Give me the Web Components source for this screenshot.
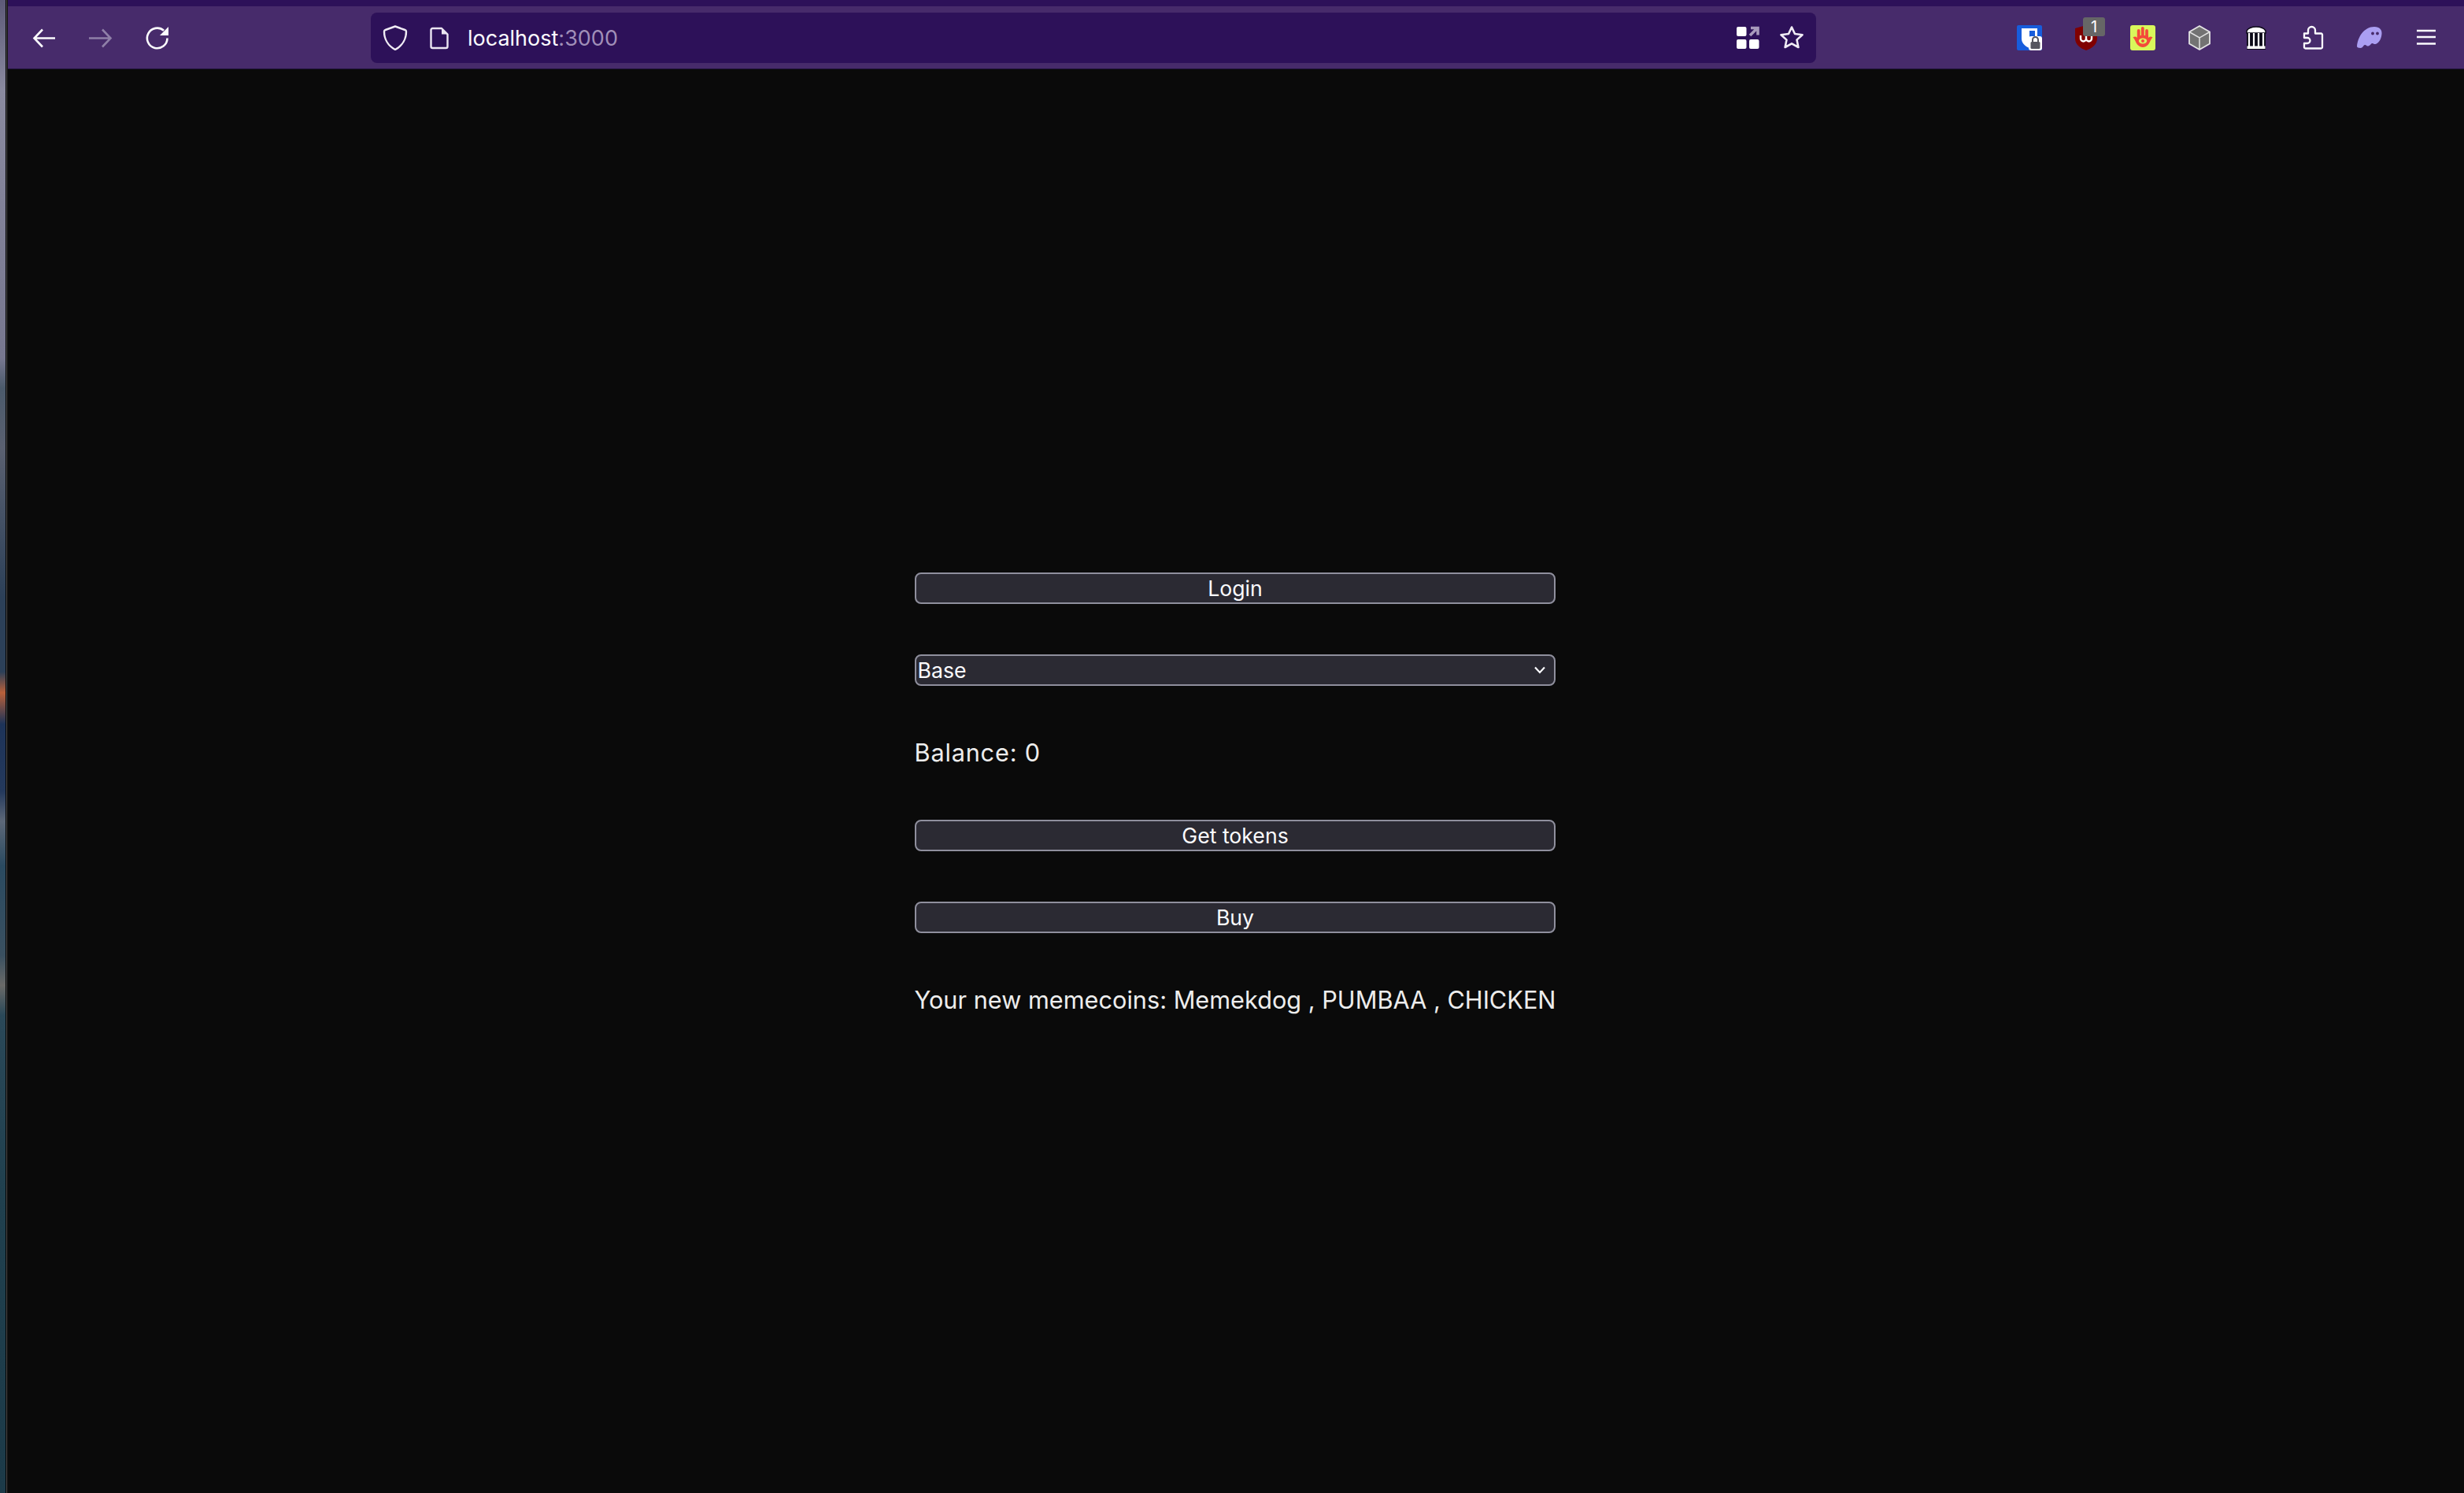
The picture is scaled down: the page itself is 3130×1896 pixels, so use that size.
<!DOCTYPE html>
<html>
<head>
<meta charset="utf-8">
<title>localhost:3000</title>
<style>
  html, body { margin: 0; height: 100%; background: #0a0a0a; }
</style>
</head>
<body>
<browser-window>
  <toolbar-button slot="nav">
    <svg viewBox="0 0 32 32"><path d="M30 16.500H4M14 5.500 3.500 16.500 14 27.500" fill="none" stroke="#fbfbfe" stroke-width="2.600"/></svg>
  </toolbar-button>
  <toolbar-button slot="nav">
    <svg viewBox="0 0 32 32"><path d="M1 16.500h27M18 5.500l10.500 11L18 27.500" fill="none" stroke="#8f7fa8" stroke-width="2.600"/></svg>
  </toolbar-button>
  <toolbar-button slot="nav">
    <svg viewBox="0 0 32 32"><path d="M28.500 16.500a12.800 12.800 0 1 1-4.400-9.700" fill="none" stroke="#fbfbfe" stroke-width="2.600"/><path d="M30 2v11H19z" fill="#fbfbfe"/></svg>
  </toolbar-button>

  <url-bar slot="url" host="localhost" port=":3000"></url-bar>

  <toolbar-button slot="ext">
    <svg viewBox="0 0 32 32"><path d="M2 0h28a2 2 0 0 1 2 2v28a2 2 0 0 1-2 2H2a2 2 0 0 1-2-2V2a2 2 0 0 1 2-2z" fill="#175ddc"/><path d="M6 4h20v13c0 6-5 10-10 12C11 27 6 23 6 17z" fill="#fff"/><path d="M16 7h7v10c0 4-4 7-7 8.500z" fill="#175ddc"/><rect x="15" y="14" width="17" height="18" rx="3" fill="#fff"/><path d="M20 21v-2.500a3.500 3.500 0 0 1 7 0V21" fill="none" stroke="#55555f" stroke-width="2"/><rect x="17.500" y="21" width="12" height="9" rx="1.500" fill="#55555f"/></svg>
  </toolbar-button>
  <toolbar-button slot="ext" badge="1">
    <svg viewBox="0 0 32 32"><path d="M16 0 30 4v13c0 8-8 13-14 15C10 30 2 25 2 17V4z" fill="#800000"/><path d="M9 13v4a3.500 3.500 0 0 0 7 0v-4 4a3.500 3.500 0 0 0 7 0v-4" fill="none" stroke="#fff" stroke-width="2.400"/></svg>
  </toolbar-button>
  <toolbar-button slot="ext">
    <svg viewBox="0 0 32 32"><rect width="32" height="32" rx="3" fill="#d9f75b"/><path d="M10.700 15V7M15.800 15V4M21 15V7" fill="none" stroke="#f4493a" stroke-width="3.800" stroke-linecap="round"/><path d="M3.500 15.500c2.500-2 4.500-1 5.500.5V13h14v3c1-1.500 3-2.500 5.500-.5-2.500 2-3.500 7-6 9.500-2 2-4 3-6.500 3s-4.500-1-6.500-3c-2.500-2.500-3.500-7.500-6-9.500z" fill="#f4493a"/><ellipse cx="16" cy="20" rx="5.200" ry="3.400" fill="#d9f75b"/><circle cx="16" cy="20" r="2" fill="#f4493a"/></svg>
  </toolbar-button>
  <toolbar-button slot="ext">
    <svg viewBox="0 0 32 32"><path d="M16 1 29 8.500v15L16 31 3 23.500v-15z" fill="#737373" stroke="#e4e4e4" stroke-width="1.800" stroke-linejoin="round"/><path d="M3 8.500 16 16 29 8.500M16 16v15" fill="none" stroke="#e4e4e4" stroke-width="1.500"/></svg>
  </toolbar-button>
  <toolbar-button slot="ext">
    <svg viewBox="0 0 32 32"><rect x="4" y="8" width="24" height="23" fill="#0c0a18"/><path d="M16 2C21 2 26 4 28 7v3H4V7c2-3 7-5 12-5z" fill="#fff" stroke="#0c0a18" stroke-width="1.500"/><path d="M7 10v17M13 10v17M19 10v17M25 10v17" stroke="#fff" stroke-width="2.200"/><rect x="4.500" y="26.500" width="23" height="3.500" fill="#fff"/></svg>
  </toolbar-button>
  <toolbar-button slot="ext">
    <svg viewBox="0 0 32 32"><path d="M5 10.500h5V6.500a4.500 4.500 0 0 1 9 0v4h7.500a1.500 1.500 0 0 1 1.500 1.500v16a1.500 1.500 0 0 1-1.500 1.500h-20A1.500 1.500 0 0 1 5 28v-5h4a3.500 3.500 0 0 0 0-7H5z" fill="none" stroke="#fbfbfe" stroke-width="2.300" stroke-linejoin="round"/></svg>
  </toolbar-button>
  <toolbar-button slot="ext">
    <svg viewBox="0 0 32 32"><path d="M0 27C1 15 9 2 22 2c7 0 10 4 9.500 9-.5 7-4 12-8 13-2 .5-3-1.500-4.500-1-1.500.5-2 3-4.500 3.500-2 .5-3-2-4.500-1.500-2 .5-2.500 4-5.500 4-2.500 0-4.500-1-4.500-2z" fill="#ab9ff2"/><circle cx="20" cy="10.500" r="1.900" fill="#472b6b"/><circle cx="26" cy="10.500" r="1.900" fill="#472b6b"/></svg>
  </toolbar-button>
  <toolbar-button slot="ext">
    <svg viewBox="0 0 32 32"><path d="M4 7h24M4 15h24M4 23.500h24" fill="none" stroke="#fbfbfe" stroke-width="2.600"/></svg>
  </toolbar-button>

  <memecoin-app>
    <app-button>Login</app-button>
    <app-select value="Base"></app-select>
    <app-text style="letter-spacing: 0.8px">Balance: 0</app-text>
    <app-button>Get tokens</app-button>
    <app-button>Buy</app-button>
    <app-text>Your new memecoins: Memekdog , PUMBAA , CHICKEN</app-text>
  </memecoin-app>
</browser-window>

<script>
// toolbar button: fixed slot, svg comes in from outside, optional count badge
class ToolbarButton extends HTMLElement {
  constructor() {
    super();
    this.attachShadow({ mode: "open" });
    this.shadowRoot.innerHTML = `
      <style>
        :host {
          display: flex;
          position: relative;
          width: 72px;
          height: 64px;
          align-items: center;
          justify-content: center;
        }
        ::slotted(svg) {
          width: 32px;
          height: 32px;
          display: block;
        }
        .badge {
          position: absolute;
          left: 32px;
          top: 6px;
          width: 28px;
          height: 24px;
          border-radius: 3px;
          background: #666666;
          color: #ffffff;
          font: 20px/24px "Inter", sans-serif;
          text-align: center;
        }
      </style>
      <slot></slot>
    `;
  }

  connectedCallback() {
    const count = this.getAttribute("badge");
    if (!count) return;
    const badge = document.createElement("span");
    badge.className = "badge";
    badge.textContent = count;
    this.shadowRoot.appendChild(badge);
  }
}

class UrlBar extends HTMLElement {
  constructor() {
    super();
    this.attachShadow({ mode: "open" });
    this.shadowRoot.innerHTML = `
      <style>
        :host {
          display: flex;
          flex: 1;
          height: 64px;
          align-items: center;
          box-sizing: border-box;
          padding: 0 15px 0 15px;
          border-radius: 8px;
          background: #2d1159;
          font: 27px "Inter", sans-serif;
          color: #fbfbfe;
        }
        svg { width: 32px; height: 32px; display: block; flex: none; }
        .shield { margin-right: 24px; }
        .page { margin-right: 20px; }
        .addr { flex: 1; white-space: nowrap; padding-top: 1px; }
        .port { color: #a08fb8; }
        .end { margin-left: 24px; }
      </style>
      <svg class="shield" viewBox="0 0 32 32"><path d="M16 1.500 28.500 6c1.200.400 1.500 1 1.500 2 0 9-4.500 18-14 23C6.500 26 2 17 2 8c0-1 .300-1.600 1.500-2z" fill="none" stroke="#f0ecf5" stroke-width="2.400" stroke-linejoin="round"/></svg>
      <svg class="page" viewBox="0 0 32 32"><path d="M7.500 4H19l7.500 7.500V27a2 2 0 0 1-2 2H7.500a2 2 0 0 1-2-2V6a2 2 0 0 1 2-2z" fill="none" stroke="#ebe5f2" stroke-width="2.400" stroke-linejoin="round"/><path d="M19 4v7.500h7.500z" fill="#ebe5f2"/></svg>
      <span class="addr"><span class="host"></span><span class="port"></span></span>
      <svg viewBox="0 0 32 32"><rect x="2" y="2" width="12.500" height="12" rx="2" fill="#fff"/><rect x="2" y="18" width="12.500" height="12" rx="2" fill="#fff"/><rect x="18" y="18" width="12.500" height="12" rx="2" fill="#fff"/><path d="M20 3.500h9v9M28 4 19 13" fill="none" stroke="#a89bbc" stroke-width="3.600"/></svg>
      <svg class="end" viewBox="0 0 32 32"><path d="M16 2.500 20 11l9.500 1.200-7 6.400 1.900 9.400L16 23.300 7.600 28l1.900-9.400-7-6.400L12 11z" fill="none" stroke="#f0ecf5" stroke-width="2.600" stroke-linejoin="round"/></svg>
    `;
  }

  connectedCallback() {
    this.shadowRoot.querySelector(".host").textContent = this.getAttribute("host");
    this.shadowRoot.querySelector(".port").textContent = this.getAttribute("port");
  }
}

// the whole window: desktop sliver on the left, then toolbar and page
class BrowserWindow extends HTMLElement {
  constructor() {
    super();
    this.attachShadow({ mode: "open" });
    this.shadowRoot.innerHTML = `
      <style>
        :host {
          display: flex;
          height: 100vh;
          overflow: hidden;
        }
        .desktop {
          flex: none;
          width: 7px;
          background: linear-gradient(180deg,
            #5d5a78 0, #8a8a9f 6%, #77778f 24%, #4b5a6b 26%, #5a6070 30%,
            #2c4058 40%, #2c4058 45%, #b8603a 46.400%, #1d3358 48.500%, #24395c 53%,
            #5d6878 55%, #2a4a60 58%, #3a5060 64%, #6a6a68 66%, #2a4858 68%, #20404e 80%, #1c3a48 100%);
        }
        .edge {
          flex: none;
          width: 3px;
          box-sizing: border-box;
          background: #4a4a4a;
          border-left: 1px solid #000000;
          border-right: 1px solid #111111;
        }
        .browser {
          flex: 1;
          min-width: 0;
          display: flex;
          flex-direction: column;
        }
        .tabstrip {
          height: 8px;
          background: #2d1159;
        }
        .toolbar {
          display: flex;
          height: 80px;
          box-sizing: border-box;
          align-items: center;
          padding: 0 12px 0 10px;
          background: #472b6b;
          border-bottom: 1px solid #21143a;
        }
        .nav, .ext { display: flex; flex: none; }
        .url { display: flex; flex: 1; margin: 0 235px; min-width: 0; }
        .page {
          flex: 1;
          min-height: 0;
          display: flex;
        }
      </style>
      <div class="desktop"></div>
      <div class="edge"></div>
      <div class="browser">
        <div class="tabstrip"></div>
        <div class="toolbar">
          <div class="nav"><slot name="nav"></slot></div>
          <div class="url"><slot name="url"></slot></div>
          <div class="ext"><slot name="ext"></slot></div>
        </div>
        <div class="page"><slot></slot></div>
      </div>
    `;
  }
}

class MemecoinApp extends HTMLElement {
  constructor() {
    super();
    this.attachShadow({ mode: "open" });
    this.shadowRoot.innerHTML = `
      <style>
        :host {
          display: flex;
          flex: 1;
          align-items: center;
          justify-content: center;
          padding: 34px 2px 0 0;
          background: #0a0a0a;
          color: #ededed;
          font: 30.700px/42px "Inter", sans-serif;
        }
        .stack {
          display: flex;
          flex-direction: column;
          gap: 64px;
        }
      </style>
      <div class="stack"><slot></slot></div>
    `;
  }
}

class AppButton extends HTMLElement {
  constructor() {
    super();
    this.attachShadow({ mode: "open" });
    this.shadowRoot.innerHTML = `
      <style>
        :host { display: block; }
        button {
          display: block;
          width: 100%;
          height: 40px;
          padding: 0;
          box-sizing: border-box;
          border: 2px solid #8f8f9d;
          border-radius: 8px;
          background: #2b2a33;
          color: #fbfbfe;
          font: 26.670px/36px "Inter", sans-serif;
        }
      </style>
      <button><slot></slot></button>
    `;
  }
}

class AppSelect extends HTMLElement {
  constructor() {
    super();
    this.attachShadow({ mode: "open" });
    this.shadowRoot.innerHTML = `
      <style>
        :host { display: block; position: relative; }
        select {
          display: block;
          width: 100%;
          height: 40px;
          padding: 0 0 0 2px;
          box-sizing: border-box;
          appearance: none;
          border: 2px solid #8f8f9d;
          border-radius: 8px;
          background: #2b2a33;
          color: #fbfbfe;
          font: 26.670px "Inter", sans-serif;
        }
        svg {
          position: absolute;
          right: 12px;
          top: 14px;
          width: 16px;
          height: 12px;
          pointer-events: none;
        }
      </style>
      <select></select>
      <svg viewBox="0 0 16 12"><path d="m2 2.500 6 6.500 6-6.500" fill="none" stroke="#fbfbfe" stroke-width="2.200"/></svg>
    `;
  }

  connectedCallback() {
    const option = document.createElement("option");
    option.textContent = this.getAttribute("value");
    this.shadowRoot.querySelector("select").appendChild(option);
  }
}

class AppText extends HTMLElement {
  constructor() {
    super();
    this.attachShadow({ mode: "open" });
    this.shadowRoot.innerHTML = `
      <style>
        :host { display: block; white-space: nowrap; }
      </style>
      <slot></slot>
    `;
  }
}

customElements.define("toolbar-button", ToolbarButton);
customElements.define("url-bar", UrlBar);
customElements.define("browser-window", BrowserWindow);
customElements.define("memecoin-app", MemecoinApp);
customElements.define("app-button", AppButton);
customElements.define("app-select", AppSelect);
customElements.define("app-text", AppText);
</script>
</body>
</html>
